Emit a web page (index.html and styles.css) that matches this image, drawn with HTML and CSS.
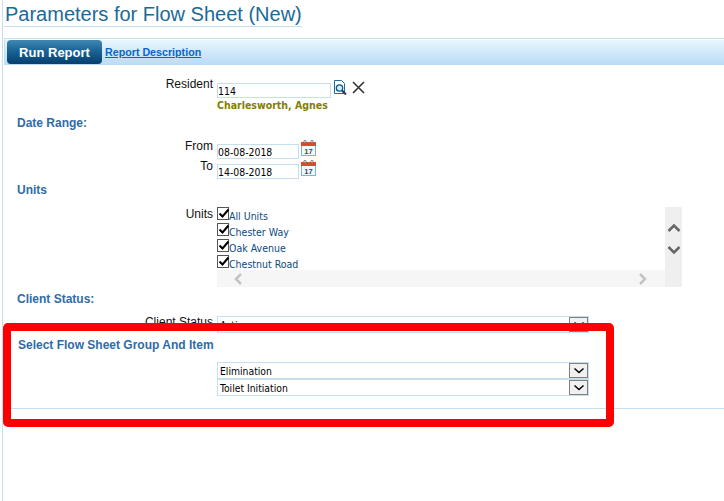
FILE: index.html
```html
<!DOCTYPE html>
<html lang="en">

<head>
  <meta charset="UTF-8">
  <meta name="viewport" content="width=device-width, initial-scale=1.0">
  <title>Parameters for Flow Sheet (New)</title>
  <link rel="stylesheet" href="styles.css">
</head>

<body>
  <div class="page">
    <h1 class="title">Parameters for Flow Sheet (New)</h1>

    <div class="toolbar">
      <button class="run-btn" type="button">Run Report</button>
      <a class="desc-link" href="#">Report Description</a>
    </div>

    <div class="row row-resident">
      <label class="row-label">Resident</label>
      <div class="row-field">
        <input class="text-input resident-input" type="text" value="114">
        <svg class="icon-search" width="14" height="15" viewBox="0 0 14 15">
          <path d="M1.500 .5h7l3 3v10h-10z" fill="#fff" stroke="#1a6c9e"/>
          <circle cx="6.500" cy="8" r="3.200" fill="#d4eef8" stroke="#14577f" stroke-width="1.300"/>
          <path d="M9 10.500l4 4" stroke="#14405f" stroke-width="2"/>
        </svg>
        <svg class="icon-clear" width="13" height="13" viewBox="0 0 13 13">
          <path d="M1 1l11 11M12 1L1 12" stroke="#333" stroke-width="1.600"/>
        </svg>
      </div>
    </div>
    <div class="resident-name">Charlesworth, Agnes</div>

    <h3 class="section date-heading">Date Range:</h3>
    <div class="row row-date">
      <label class="row-label">From</label>
      <div class="row-field">
        <input class="text-input date-input" type="text" value="08-08-2018">
        <svg class="icon-cal" width="15" height="16" viewBox="0 0 15 16">
          <rect x="0.500" y="2.500" width="14" height="13" fill="#f2f8fc" stroke="#7fb4d6"/>
          <rect x="0" y="2" width="15" height="4" fill="#dc4a2c"/>
          <circle cx="4" cy="1.500" r="1.200" fill="#ddd" stroke="#888"/>
          <circle cx="11" cy="1.500" r="1.200" fill="#ddd" stroke="#888"/>
          <text class="cal-day" x="7.500" y="13.500">17</text>
        </svg>
      </div>
    </div>
    <div class="row row-date">
      <label class="row-label">To</label>
      <div class="row-field">
        <input class="text-input date-input" type="text" value="14-08-2018">
        <svg class="icon-cal" width="15" height="16" viewBox="0 0 15 16">
          <rect x="0.500" y="2.500" width="14" height="13" fill="#f2f8fc" stroke="#7fb4d6"/>
          <rect x="0" y="2" width="15" height="4" fill="#dc4a2c"/>
          <circle cx="4" cy="1.500" r="1.200" fill="#ddd" stroke="#888"/>
          <circle cx="11" cy="1.500" r="1.200" fill="#ddd" stroke="#888"/>
          <text class="cal-day" x="7.500" y="13.500">17</text>
        </svg>
      </div>
    </div>

    <h3 class="section units-heading">Units</h3>
    <div class="row row-units">
      <label class="row-label">Units</label>
      <div class="units-box">
        <div class="units-main">
          <ul class="units-list">
            <li class="unit"><span class="check"><svg width="12" height="11" viewBox="0 0 12 11"><path d="M1.500 5.500l3 3 6-7" fill="none" stroke="#000" stroke-width="2"/></svg></span>All Units</li>
            <li class="unit"><span class="check"><svg width="12" height="11" viewBox="0 0 12 11"><path d="M1.500 5.500l3 3 6-7" fill="none" stroke="#000" stroke-width="2"/></svg></span>Chester Way</li>
            <li class="unit"><span class="check"><svg width="12" height="11" viewBox="0 0 12 11"><path d="M1.500 5.500l3 3 6-7" fill="none" stroke="#000" stroke-width="2"/></svg></span>Oak Avenue</li>
            <li class="unit"><span class="check"><svg width="12" height="11" viewBox="0 0 12 11"><path d="M1.500 5.500l3 3 6-7" fill="none" stroke="#000" stroke-width="2"/></svg></span>Chestnut Road</li>
          </ul>
          <div class="hscroll">
            <svg width="10" height="12" viewBox="0 0 10 12"><path d="M8 1L3 6l5 5" fill="none" stroke="#c4c4c4" stroke-width="2.500"/></svg>
            <svg width="10" height="12" viewBox="0 0 10 12"><path d="M2 1l5 5-5 5" fill="none" stroke="#c4c4c4" stroke-width="2.500"/></svg>
          </div>
        </div>
        <div class="vscroll">
          <svg width="14" height="10" viewBox="0 0 14 10"><path d="M1.500 8L7 2.500 12.500 8" fill="none" stroke="#666" stroke-width="2.500"/></svg>
          <svg width="14" height="10" viewBox="0 0 14 10"><path d="M1.500 2L7 7.500 12.500 2" fill="none" stroke="#666" stroke-width="2.500"/></svg>
        </div>
      </div>
    </div>

    <h3 class="section status-heading">Client Status:</h3>
    <div class="row row-status">
      <label class="row-label">Client Status</label>
      <div class="select-box">
        <span class="select-text">Active</span>
        <span class="select-arrow"><svg width="12" height="8" viewBox="0 0 12 8"><path d="M1.500 1.500L6 5.500l4.500-4" fill="none" stroke="#000" stroke-width="1.500"/></svg></span>
      </div>
    </div>

    <h3 class="section group-heading">Select Flow Sheet Group And Item</h3>
    <div class="select-stack">
      <div class="select-box">
        <span class="select-text">Elimination</span>
        <span class="select-arrow"><svg width="12" height="8" viewBox="0 0 12 8"><path d="M1.500 1.500L6 5.500l4.500-4" fill="none" stroke="#000" stroke-width="1.500"/></svg></span>
      </div>
      <div class="select-box">
        <span class="select-text">Toilet Initiation</span>
        <span class="select-arrow"><svg width="12" height="8" viewBox="0 0 12 8"><path d="M1.500 1.500L6 5.500l4.500-4" fill="none" stroke="#000" stroke-width="1.500"/></svg></span>
      </div>
    </div>

    <div class="bottom-line"></div>
  </div>

  <div class="highlight"></div>
</body>

</html>
```

FILE: styles.css
```css
html,
body {
  margin: 0;
  height: 100%;
  overflow: hidden;
}

body {
  font-family: "Liberation Sans", Arial, sans-serif;
  background: #fff;
  position: relative;
}

.page {
  margin-left: 2px;
  height: 501px;
  border-left: 1px solid #c5e0ec;
  box-sizing: border-box;
  padding-top: 1px;
}

.title {
  display: inline-block;
  margin: 0 0 11px 1px;
  padding-left: 1px;
  height: 25px;
  line-height: 27px;
  font-size: 20px;
  font-weight: normal;
  color: #1b6a96;
  border-bottom: 1px solid #c5e0ec;
}

.toolbar {
  margin-left: 1px;
  height: 26px;
  display: flex;
  align-items: center;
  gap: 3px;
  padding-left: 3px;
  border-top: 1px solid #c5e0ec;
  border-left: 1px solid #c5e0ec;
  box-shadow: inset 0 1px 0 #fff;
  background: linear-gradient(to bottom, #e9f7fe, #b9dcf6);
}

.run-btn {
  width: 95px;
  height: 24px;
  margin-left: -1px;
  padding: 0;
  border: 0;
  border-radius: 4px;
  font-family: inherit;
  font-size: 13px;
  font-weight: bold;
  color: #fff;
  background: linear-gradient(to bottom, #3f88b4 0%, #1a6496 45%, #053f6e 100%);
}

.desc-link {
  font-size: 10.700px;
  font-weight: bold;
  color: #0a66c8;
}

.row {
  display: flex;
}

.row-label {
  width: 210px;
  flex: none;
  text-align: right;
  font-size: 12px;
  line-height: 14px;
  color: #111;
}

.row-field {
  display: flex;
  margin-left: 4px;
}

.row-resident {
  margin-top: 12px;
  height: 21px;
}

.text-input {
  box-sizing: border-box;
  margin: 5px 0 0;
  padding: 1px 0 0;
  height: 15px;
  border: 1px solid #c5e0ec;
  border-radius: 0;
  outline: none;
  background: #fff;
  color: #000;
  font-family: "DejaVu Sans Condensed", "Noto Sans", Tahoma, sans-serif;
  font-size: 10.400px;
}

.resident-input {
  margin-top: 6px;
  width: 114px;
}

.icon-search {
  margin: 3px 0 0 2px;
}

.icon-clear {
  margin: 4px 0 0 5px;
}

.resident-name {
  margin-left: 214px;
  font-family: "DejaVu Sans Condensed", "Noto Sans", Tahoma, sans-serif;
  font-size: 10.500px;
  font-weight: bold;
  line-height: 14px;
  color: #808000;
}

.section {
  margin: 0 0 0 14px;
  font-size: 12px;
  font-weight: bold;
  line-height: 16px;
  color: #2f6ba8;
}

.date-heading {
  margin-top: 3px;
  margin-bottom: 8px;
}

.row-date {
  height: 20px;
}

.date-input {
  width: 82px;
}

.icon-cal {
  margin: 1px 0 0 2px;
}

.cal-day {
  font-family: "Liberation Sans", Arial, sans-serif;
  font-size: 7.500px;
  font-weight: bold;
  fill: #2d4f6a;
  text-anchor: middle;
}

.units-heading {
  margin-top: 3px;
  margin-bottom: 9px;
}

.row-units {
  height: 80px;
}

.units-box {
  display: flex;
  margin-left: 4px;
  width: 465px;
  height: 80px;
}

.units-main {
  width: 448px;
  display: flex;
  flex-direction: column;
}

.units-list {
  list-style: none;
  margin: 0;
  padding: 0;
  height: 63px;
}

.unit {
  display: flex;
  height: 16px;
  font-family: "DejaVu Sans Condensed", "Noto Sans", Tahoma, sans-serif;
  font-size: 10.500px;
  line-height: 18px;
  color: #0a4a80;
}

.check {
  width: 10px;
  height: 11px;
  border: 1px solid #555;
  flex: none;
  background: #fff;
}

.check svg {
  display: block;
}

.hscroll {
  height: 17px;
  flex: none;
  background: #f6f6f6;
  display: flex;
  align-items: center;
  justify-content: space-between;
  padding: 0 17px 0 16px;
}

.vscroll {
  width: 17px;
  background: #efefef;
  display: flex;
  flex-direction: column;
  align-items: center;
  gap: 12px;
  padding-top: 16px;
  box-sizing: border-box;
}

.status-heading {
  margin-top: 4px;
  margin-bottom: 8px;
}

.row-status {
  height: 21px;
}

.row-status .select-box {
  margin: 1px 0 0 4px;
}

.select-box {
  box-sizing: border-box;
  width: 372px;
  height: 17px;
  display: flex;
  justify-content: space-between;
  border: 1px solid #c5e0ec;
  background: #fff;
}

.select-text {
  padding-left: 2px;
  font-family: "DejaVu Sans Condensed", "Noto Sans", Tahoma, sans-serif;
  font-size: 10.300px;
  line-height: 16px;
  color: #000;
}

.select-arrow {
  box-sizing: border-box;
  width: 19px;
  height: 15px;
  display: flex;
  align-items: center;
  justify-content: center;
  border: 1px solid #808080;
  background: #f0f0f0;
}

.group-heading {
  margin-top: 1px;
  margin-left: 15px;
}

.select-stack {
  margin: 9px 0 0 214px;
}

.bottom-line {
  margin-top: 12px;
  border-top: 1px solid #c5e0ec;
}

/* red box somebody drew over the screenshot */
.highlight {
  position: absolute;
  left: 3px;
  top: 323px;
  width: 595px;
  height: 88px;
  border: 8px solid #ff0000;
  border-radius: 5px;
}
```
